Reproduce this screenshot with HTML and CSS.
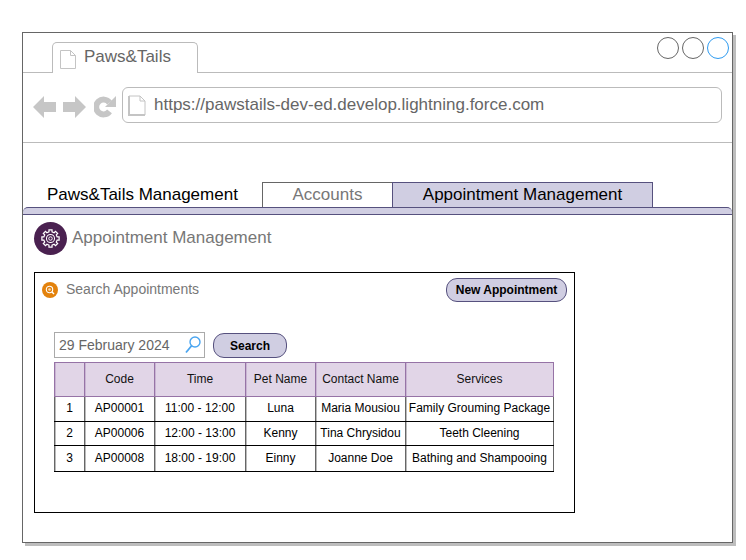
FILE: index.html
```html
<!DOCTYPE html>
<html lang="en">
<head>
<meta charset="utf-8">
<title>Paws&amp;Tails</title>
<link rel="stylesheet" href="styles.css">
</head>
<body>
<div class="window-shadow">
<div class="window">
  <div class="tabstrip">
    <div class="browser-tab">
      <svg class="doc-icon" viewBox="0 0 16 19"><path d="M.5.5H10.5L15.5 5.5V18.5H.5ZM10.5.5V5.5H15.5" fill="#fff" stroke="#c4c4c4"/></svg>
      <span>Paws&amp;Tails</span>
    </div>
    <div class="window-controls">
      <span class="control"></span><span class="control"></span><span class="control control-active"></span>
    </div>
  </div>
  <div class="addressbar">
    <svg class="nav-icon" viewBox="0 0 23 24"><path d="M0 12 11 1V7H23V17H11V23Z" fill="#c6c6c6"/></svg>
    <svg class="nav-icon" viewBox="0 0 23 24"><path d="M23 12 12 1V7H0V17H12V23Z" fill="#c6c6c6"/></svg>
    <svg class="nav-icon nav-reload" viewBox="0 0 22 24"><path d="M15.5 7.6A7.4 7.4 0 1 0 15.5 16.4" fill="none" stroke="#c6c6c6" stroke-width="6"/><path d="M22 1V12H11Z" fill="#c6c6c6"/></svg>
    <div class="urlbox">
      <svg class="url-doc" viewBox="0 0 18 21"><path d="M1 1H12L17 6V20H1ZM12 1V6H17" fill="#fff" stroke="#c4c4c4"/><path d="M1 1V20H17" fill="none" stroke="#c4c4c4" stroke-width="2"/></svg>
      <span>https://pawstails-dev-ed.develop.lightning.force.com</span>
    </div>
  </div>
  <div class="appnav">
    <div class="appname">Paws&amp;Tails Management</div>
    <div class="apptab apptab-accounts">Accounts</div>
    <div class="apptab apptab-current">Appointment Management</div>
  </div>
  <div class="navbar-strip"></div>
  <main class="page">
    <div class="page-heading">
      <span class="page-icon">
        <svg viewBox="-12 -12 24 24"><polygon fill="none" stroke="#fff" stroke-width="1.4" points="7.6,-1.75 9.85,-1.75 9.85,1.75 7.6,1.75 6.61,4.14 8.2,5.73 5.73,8.2 4.14,6.61 1.75,7.6 1.75,9.85 -1.75,9.85 -1.75,7.6 -4.14,6.61 -5.73,8.2 -8.2,5.73 -6.61,4.14 -7.6,1.75 -9.85,1.75 -9.85,-1.75 -7.6,-1.75 -6.61,-4.14 -8.2,-5.73 -5.73,-8.2 -4.14,-6.61 -1.75,-7.6 -1.75,-9.85 1.75,-9.85 1.75,-7.6 4.14,-6.61 5.73,-8.2 8.2,-5.73 6.61,-4.14"/><circle r="4.6" fill="none" stroke="#fff" stroke-width="1.2"/><circle r="2" fill="none" stroke="#fff" stroke-width="1.1"/></svg>
      </span>
      <h1>Appointment Management</h1>
    </div>
    <section class="card">
      <div class="card-head">
        <div class="card-title">
          <svg class="search-badge" viewBox="0 0 16 16"><circle cx="8" cy="8" r="8" fill="#e3820c"/><circle cx="7.5" cy="7.5" r="3.2" fill="none" stroke="#fff" stroke-width="1.1"/><circle cx="7.5" cy="7.5" r="1.3" fill="#fff" opacity=".7"/><path d="M10 10 12 12" stroke="#fff" stroke-width="1.4"/></svg>
          <span>Search Appointments</span>
        </div>
        <button class="pill pill-new" type="button">New Appointment</button>
      </div>
      <div class="search-row">
        <div class="datebox">
          <span>29 February 2024</span>
          <svg class="lens" viewBox="0 0 16 18"><circle cx="10" cy="6" r="5" fill="none" stroke="#4aa5f0" stroke-width="1.4"/><path d="M6.6 9.7 1 16.5" stroke="#4aa5f0" stroke-width="1.8"/></svg>
        </div>
        <button class="pill pill-search" type="button">Search</button>
      </div>
      <table class="grid">
        <colgroup>
          <col class="c-num"><col class="c-code"><col class="c-time"><col class="c-pet"><col class="c-contact"><col class="c-services">
        </colgroup>
        <thead>
          <tr><th></th><th>Code</th><th>Time</th><th>Pet Name</th><th>Contact Name</th><th>Services</th></tr>
        </thead>
        <tbody>
          <tr class="r1"><td>1</td><td>AP00001</td><td>11:00 - 12:00</td><td>Luna</td><td>Maria Mousiou</td><td>Family Grouming Package</td></tr>
          <tr class="r2"><td>2</td><td>AP00006</td><td>12:00 - 13:00</td><td>Kenny</td><td>Tina Chrysidou</td><td>Teeth Cleening</td></tr>
          <tr class="r3"><td>3</td><td>AP00008</td><td>18:00 - 19:00</td><td>Einny</td><td>Joanne Doe</td><td>Bathing and Shampooing</td></tr>
        </tbody>
      </table>
    </section>
  </main>
</div>
</div>
</body>
</html>
```

FILE: styles.css
```css
* { box-sizing: border-box; }
html { margin: 0; background: #fff; }
body {
  margin: 0;
  padding: 32px 0 0 22px;
  font-family: "Liberation Sans", Arial, sans-serif;
  color: #000;
}
.window-shadow {
  width: 714px;
  height: 514px;
  background: #bdbdbd;
  clip-path: polygon(0 0, 711px 0, 711px 3px, 714px 3px, 714px 514px, 3px 514px, 3px 511px, 0 511px);
}
.window {
  width: 711px;
  height: 511px;
  border: 1px solid #666;
  background: #fff;
}
.tabstrip {
  display: flex;
  height: 40px;
  padding: 0 3px 0 29px;
  border-bottom: 1px solid #bbb;
}
.browser-tab {
  display: flex;
  align-items: flex-start;
  width: 146px;
  height: 31px;
  margin-top: 9px;
  padding: 7px 0 0 7px;
  border: 1px solid #bbb;
  border-bottom: 0;
  border-radius: 5px 5px 0 0;
  background: #fff;
  font-size: 17px;
  color: #666;
}
.browser-tab span { margin: -3px 0 0 8px; line-height: 20px; }
.doc-icon { width: 16px; height: 19px; }
.window-controls {
  display: flex;
  gap: 3px;
  margin: 4px 0 0 auto;
}
.control {
  width: 22px;
  height: 22px;
  border: 1px solid #666;
  border-radius: 50%;
}
.control-active { border-color: #2f9bf0; }
.addressbar {
  display: flex;
  align-items: flex-start;
  height: 70px;
  padding: 14px 10px 0 10px;
  border-bottom: 1px solid #bbb;
}
.nav-icon {
  flex: none;
  width: 23px;
  height: 24px;
  margin: 8px 7px 0 0;
}
.nav-reload { width: 22px; margin-right: 6px; margin-left: 1px; }
.urlbox {
  display: flex;
  align-items: center;
  width: 601px;
  height: 36px;
  padding-left: 5px;
  border: 1px solid #bbb;
  border-radius: 6px;
  font-size: 17px;
  color: #666;
}
.urlbox span { margin-left: 8px; }
.url-doc { width: 18px; height: 21px; }
.appnav {
  display: flex;
  align-items: flex-end;
  height: 64px;
  padding-left: 24px;
  font-size: 17px;
}
.appname { width: 215px; height: 25px; line-height: 26px; }
.apptab {
  height: 25px;
  border: 1px solid #666;
  border-bottom: 0;
  line-height: 24px;
  text-align: center;
}
.apptab-accounts { width: 130px; border-right: 0; color: #777; }
.apptab-current { width: 261px; background: #d0cee2; border-color: #56517e; }
.navbar-strip {
  height: 8px;
  background: #d0cee2;
  border-top: 1px solid #56517e;
  border-bottom: 1px solid #56517e;
  border-radius: 5px 5px 0 0;
}
.page { padding: 7px 0 0 11px; }
.page-heading {
  display: flex;
  align-items: center;
  gap: 5px;
  height: 33px;
}
.page-icon {
  display: flex;
  align-items: center;
  justify-content: center;
  width: 33px;
  height: 33px;
  border-radius: 50%;
  background: #4a2150;
}
.page-icon svg { width: 21px; height: 21px; }
h1 {
  margin: 0 0 2px;
  font-size: 17px;
  font-weight: 400;
  color: #777;
}
.card {
  width: 541px;
  height: 241px;
  margin-top: 17px;
  border: 1px solid #000;
}
.card-head {
  display: flex;
  justify-content: space-between;
  align-items: center;
  padding: 5px 7px 0 7px;
}
.card-title {
  display: flex;
  align-items: center;
  gap: 8px;
  font-size: 14px;
  line-height: 16px;
  color: #777;
}
.card-title span { margin-bottom: 2px; }
.search-badge { width: 16px; height: 16px; }
.pill {
  height: 25px;
  padding: 0;
  border: 1px solid #56517e;
  border-radius: 11px;
  background: #d0cee2;
  font: 700 12px "Liberation Sans", Arial, sans-serif;
  color: #000;
}
.pill-new { width: 121px; height: 24px; }
.pill-search { width: 74px; margin-left: 8px; }
.search-row {
  display: flex;
  align-items: flex-end;
  margin: 30px 0 4px 19px;
}
.datebox {
  display: flex;
  align-items: center;
  justify-content: space-between;
  width: 151px;
  height: 26px;
  padding: 0 3px 0 4px;
  border: 1px solid #aaa;
  font-size: 14px;
  color: #666;
}
.lens { width: 16px; height: 18px; }
.grid {
  width: 499px;
  margin-left: 19px;
  border-collapse: collapse;
  table-layout: fixed;
  font-size: 12px;
}
.c-num { width: 30px; }
.c-code { width: 70px; }
.c-time { width: 91px; }
.c-pet { width: 70px; }
.c-contact { width: 90px; }
.c-services { width: 148px; }
.grid th {
  height: 34px;
  padding: 0 0 2px;
  border: 1px solid #9673a6;
  background: #e1d5e7;
  box-shadow: inset 1px 0 0 #c9b5d3;
  font-weight: 400;
  color: #111;
}
.grid td {
  padding: 0 0 1px;
  border: 1px solid #000;
  border-left-color: #666;
  border-right-color: #666;
  box-shadow: inset 1px 0 0 #bbb;
  text-align: center;
  white-space: nowrap;
}
.r1 td { height: 25px; padding-bottom: 2px; }
.r2 td { height: 24px; padding-bottom: 2px; }
.r3 td { height: 26px; }
```
